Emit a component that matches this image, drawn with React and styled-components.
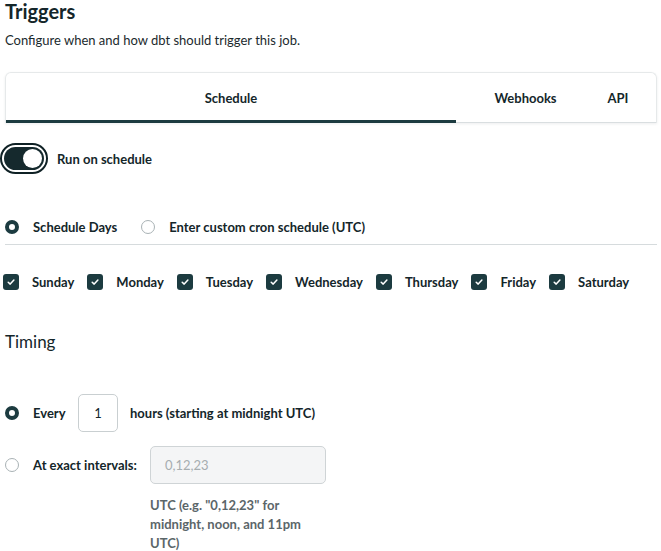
import React, { useState } from "react";
import styled, { createGlobalStyle } from "styled-components";

const GlobalStyle = createGlobalStyle`
  html, body {
    margin: 0;
    padding: 0;
    background: #fff;
  }
  body {
    font-family: "Lato", "Noto Sans", sans-serif;
    color: #1b2a2d;
  }
`;

const DARK = "#1c3b40";

const Page = styled.div`
  width: 661px;
  height: 551px;
  overflow: hidden;
  padding: 0 4px 0 5px;
  box-sizing: border-box;
`;

const Title = styled.h1`
  margin: 0;
  font-size: 20px;
  line-height: 22px;
  font-weight: 700;
  color: #14262a;
`;

const Subtitle = styled.p`
  margin: 9px 0 0;
  font-size: 13px;
  line-height: 18px;
  color: #1b2a2d;
`;

const TabCard = styled.div`
  margin-top: 23px;
  height: 51px;
  display: flex;
  border: 1px solid #e6e9ea;
  border-bottom: none;
  border-radius: 6px 6px 0 0;
  box-shadow: 0 1px 3px rgba(20, 40, 45, 0.08);
  box-sizing: border-box;
  position: relative;
  &::after {
    content: "";
    position: absolute;
    left: 0;
    right: 0;
    bottom: 0;
    height: 1px;
    background: #d9dee0;
  }
`;

const Tab = styled.div`
  flex: ${({ $grow }) => ($grow ? "0 0 450px" : "none")};
  width: ${({ $w }) => ($w ? `${$w}px` : "auto")};
  display: flex;
  align-items: center;
  justify-content: center;
  font-size: 13px;
  font-weight: 700;
  color: #14262a;
  border-bottom: 3px solid ${({ $active }) => ($active ? DARK : "transparent")};
  box-sizing: border-box;
  position: relative;
  z-index: 1;
  padding-top: 2px;
`;

const ToggleRow = styled.label`
  margin-top: 20px;
  margin-left: -5px;
  display: flex;
  align-items: center;
  gap: 9px;
  font-size: 13px;
  font-weight: 700;
  color: #14262a;
  cursor: pointer;
`;

const ToggleOuter = styled.span`
  width: 48px;
  height: 31px;
  border: 2px solid #0f2125;
  border-radius: 16px;
  padding: 2px;
  box-sizing: border-box;
  display: flex;
`;

const ToggleTrack = styled.span`
  flex: 1;
  border-radius: 12px;
  background: #15292d;
  position: relative;
  &::after {
    content: "";
    position: absolute;
    top: 2px;
    right: 2px;
    width: 19px;
    height: 19px;
    border-radius: 50%;
    background: #fff;
  }
`;

const RadioGroup = styled.div`
  margin-top: 45px;
  display: flex;
  align-items: center;
  gap: 24px;
  padding-bottom: 9px;
  border-bottom: 1px solid #d6dbdd;
`;

const Option = styled.label`
  display: flex;
  align-items: center;
  gap: 14px;
  font-size: 13px;
  font-weight: 700;
  color: #14262a;
  white-space: nowrap;
`;

const Radio = styled.span`
  width: 14px;
  height: 14px;
  border-radius: 50%;
  box-sizing: border-box;
  flex: none;
  border: ${({ $checked }) => ($checked ? `4.5px solid ${DARK}` : "1px solid #a9b2b5")};
  background: #fff;
`;

const DaysRow = styled.div`
  margin-top: 29px;
  display: flex;
  align-items: center;
  margin-left: -2px;
`;

const Day = styled.label`
  display: flex;
  align-items: center;
  gap: 13px;
  margin-right: 13px;
  font-size: 13px;
  font-weight: 700;
  color: #14262a;
`;

const Check = styled.span`
  width: 16px;
  height: 16px;
  border-radius: 3px;
  background: ${DARK};
  display: flex;
  align-items: center;
  justify-content: center;
  flex: none;
`;

const SectionTitle = styled.h2`
  margin: 41px 0 0;
  font-size: 17px;
  line-height: 22px;
  font-weight: 400;
  color: #14262a;
`;

const TimingRow = styled.div`
  margin-top: ${({ $mt }) => $mt}px;
  display: flex;
  align-items: ${({ $top }) => ($top ? "flex-start" : "center")};
`;

const TimingLabel = styled(Option)`
  width: ${({ $w }) => $w}px;
  height: 38px;
  flex: none;
`;

const NumBox = styled.div`
  width: 40px;
  height: 38px;
  border: 1px solid #c9cfd1;
  border-radius: 5px;
  box-sizing: border-box;
  display: flex;
  align-items: center;
  justify-content: center;
  font-size: 13px;
  color: #14262a;
  margin-right: 12px;
`;

const Text = styled.span`
  font-size: 13px;
  font-weight: 700;
  color: #14262a;
`;

const IntervalCol = styled.div`
  display: flex;
  flex-direction: column;
`;

const DisabledInput = styled.div`
  width: 176px;
  height: 38px;
  border: 1px solid #cfd4d6;
  border-radius: 5px;
  background: #f4f5f6;
  box-sizing: border-box;
  display: flex;
  align-items: center;
  padding-left: 14px;
  font-size: 13px;
  color: #a6adb0;
`;

const Help = styled.p`
  margin: 12px 0 0;
  width: 180px;
  font-size: 13px;
  line-height: 19px;
  font-weight: 700;
  color: #5b6669;
`;

const days = ["Sunday", "Monday", "Tuesday", "Wednesday", "Thursday", "Friday", "Saturday"];

function CheckIcon() {
  return (
    <svg width="10" height="10" viewBox="0 0 10 10">
      <path d="M2.2 5.2 L4.2 7.1 L7.9 3" fill="none" stroke="#fff" strokeWidth="1.5" strokeLinecap="round" strokeLinejoin="round" />
    </svg>
  );
}

export default function App() {
  const [tab] = useState("Schedule");
  return (
    <Page>
      <GlobalStyle />
      <Title>Triggers</Title>
      <Subtitle>Configure when and how dbt should trigger this job.</Subtitle>
      <TabCard>
        <Tab $grow $active={tab === "Schedule"}>Schedule</Tab>
        <Tab $w={139}>Webhooks</Tab>
        <Tab $w={46}>API</Tab>
      </TabCard>

      <ToggleRow>
        <ToggleOuter>
          <ToggleTrack />
        </ToggleOuter>
        Run on schedule
      </ToggleRow>

      <RadioGroup>
        <Option>
          <Radio $checked />
          Schedule Days
        </Option>
        <Option>
          <Radio />
          Enter custom cron schedule (UTC)
        </Option>
      </RadioGroup>

      <DaysRow>
        {days.map((d) => (
          <Day key={d}>
            <Check>
              <CheckIcon />
            </Check>
            {d}
          </Day>
        ))}
      </DaysRow>

      <SectionTitle>Timing</SectionTitle>

      <TimingRow $mt={41}>
        <TimingLabel $w={73}>
          <Radio $checked />
          Every
        </TimingLabel>
        <NumBox>1</NumBox>
        <Text>hours (starting at midnight UTC)</Text>
      </TimingRow>

      <TimingRow $mt={14} $top>
        <TimingLabel $w={145}>
          <Radio />
          At exact intervals:
        </TimingLabel>
        <IntervalCol>
          <DisabledInput>0,12,23</DisabledInput>
          <Help>UTC (e.g. "0,12,23" for midnight, noon, and 11pm UTC)</Help>
        </IntervalCol>
      </TimingRow>
    </Page>
  );
}
